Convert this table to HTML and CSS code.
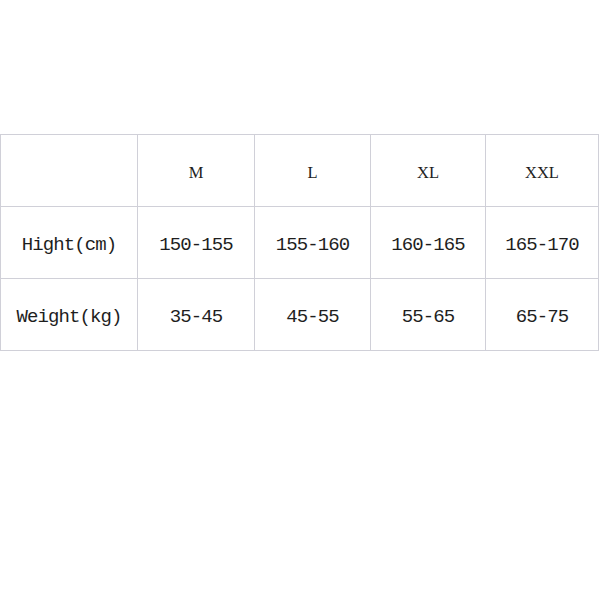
FILE: index.html
```html
<!DOCTYPE html>
<html>
<head>
<meta charset="utf-8">
<link rel="stylesheet" href="styles.css">
</head>
<body>
<div class="size-table">
  <div class="cell"></div>
  <div class="cell head">M</div>
  <div class="cell head">L</div>
  <div class="cell head">XL</div>
  <div class="cell head">XXL</div>

  <div class="cell mono">Hight(cm)</div>
  <div class="cell mono">150-155</div>
  <div class="cell mono">155-160</div>
  <div class="cell mono">160-165</div>
  <div class="cell mono">165-170</div>

  <div class="cell mono">Weight(kg)</div>
  <div class="cell mono">35-45</div>
  <div class="cell mono">45-55</div>
  <div class="cell mono">55-65</div>
  <div class="cell mono">65-75</div>
</div>
</body>
</html>
```

FILE: styles.css
```css
html, body {
  margin: 0;
  padding: 0;
  background: #ffffff;
}

.size-table {
  margin-top: 134px;
  width: 597px;
  display: grid;
  grid-template-columns: 136px 116px 115px 114px 112px;
  grid-auto-rows: 71px;
  gap: 1px;
  padding: 1px;
  background: #d0d0d8;
}

.cell {
  background: #ffffff;
  display: flex;
  align-items: center;
  justify-content: center;
  color: #1e1e1e;
  white-space: nowrap;
}

.head {
  font-family: "Liberation Serif", serif;
  font-size: 16.5px;
  padding-top: 4px;
}

.mono {
  font-family: "Liberation Mono", monospace;
  font-size: 19px;
  letter-spacing: -0.9px;
  padding-top: 5px;
}
```
